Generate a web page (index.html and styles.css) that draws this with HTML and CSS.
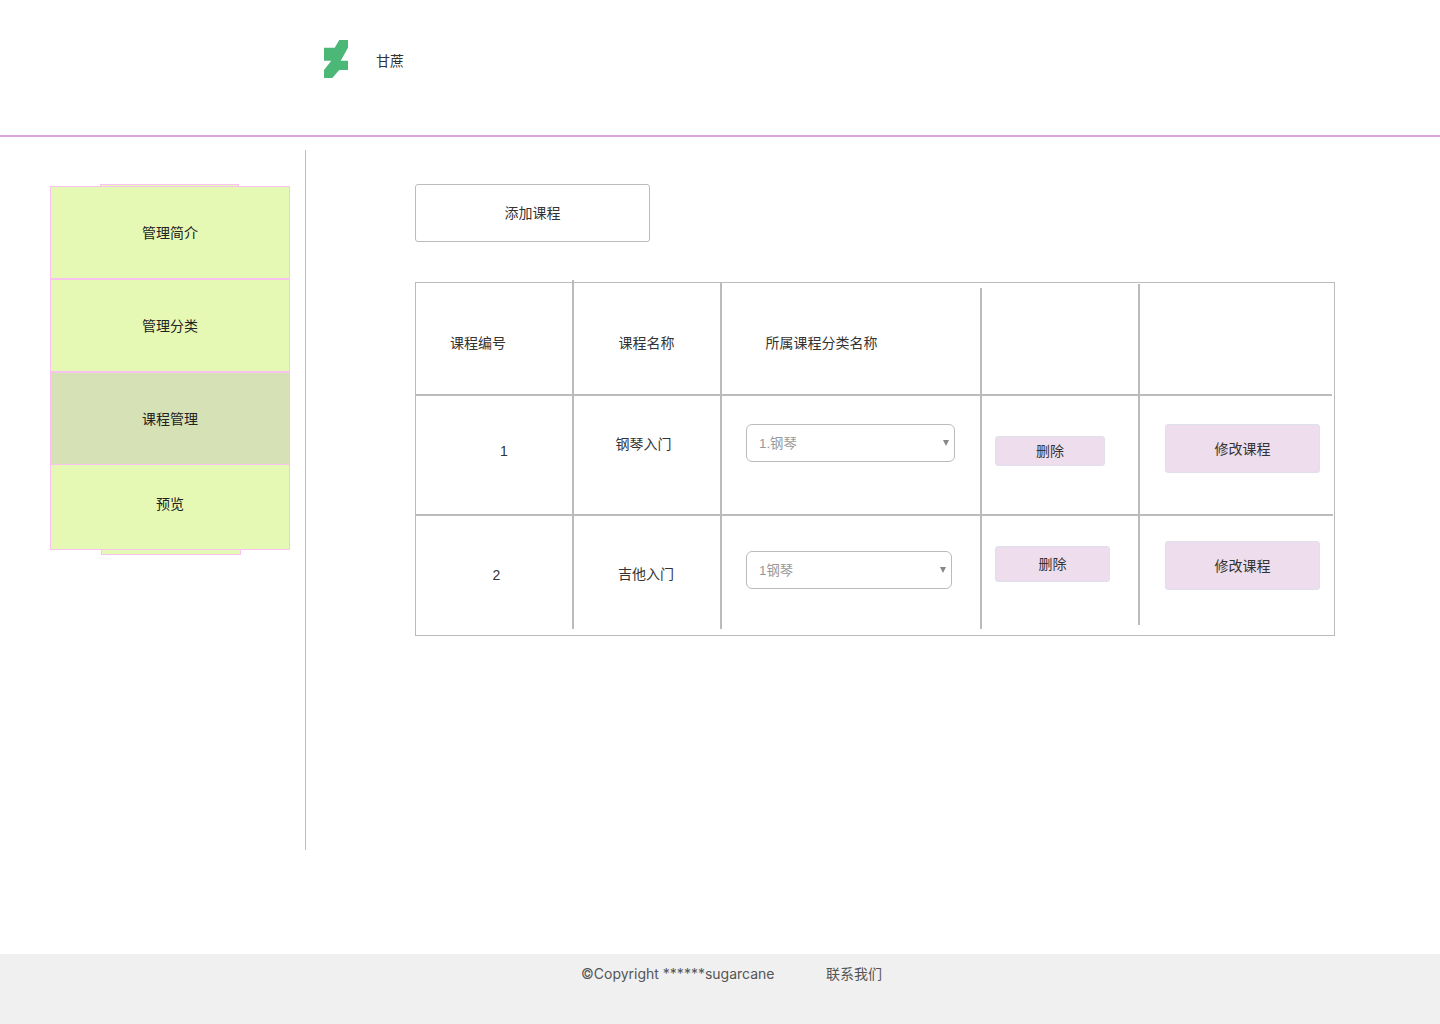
FILE: index.html
```html
<!DOCTYPE html>
<html lang="zh-CN">
<head>
  <meta charset="UTF-8" />
  <meta name="viewport" content="width=device-width, initial-scale=1.0" />
  <title>课程管理</title>
  <link rel="stylesheet" href="styles.css">
</head>
<body>
  <header class="topBar">
    <svg class="logo" viewBox="0 0 24 38" width="24" height="38" aria-hidden="true">
      <polygon points="15.3,0 24,0 24,7.7 16.7,20.7 24,20.7 24,30 15.3,30 8.3,38 0,38 0,30 7.3,20.7 0,20.7 0,7.7 10.7,7.7" />
    </svg>
    <span class="brand">甘蔗</span>
  </header>

  <div class="content">
    <aside class="side">
      <div class="strip stripTop"></div>
      <nav class="menu">
        <a class="menuItem" href="#">管理简介</a>
        <a class="menuItem" href="#">管理分类</a>
        <a class="menuItem active" href="#">课程管理</a>
        <a class="menuItem last" href="#">预览</a>
      </nav>
      <div class="strip stripBottom"></div>
    </aside>

    <main class="main">
      <button class="addBtn" type="button">添加课程</button>

      <div class="courseTable">
        <div class="cell headNum">课程编号</div>
        <div class="cell headName">课程名称</div>
        <div class="cell headType">所属课程分类名称</div>
        <div class="cell"></div>
        <div class="cell"></div>

        <div class="cell numOne">1</div>
        <div class="cell nameOne">钢琴入门</div>
        <div class="cell selectOne">
          <div class="selectWrap wide">
            <select><option>1.钢琴</option></select>
          </div>
        </div>
        <div class="cell delOne"><button class="pinkBtn smallBtn" type="button">删除</button></div>
        <div class="cell editOne"><button class="pinkBtn editBtn" type="button">修改课程</button></div>

        <div class="cell numTwo">2</div>
        <div class="cell nameTwo">吉他入门</div>
        <div class="cell selectTwo">
          <div class="selectWrap">
            <select><option>1钢琴</option></select>
          </div>
        </div>
        <div class="cell delTwo"><button class="pinkBtn bigDel" type="button">删除</button></div>
        <div class="cell editTwo"><button class="pinkBtn editBtn" type="button">修改课程</button></div>

        <!-- hand drawn divider lines, they don't line up exactly -->
        <span class="vLine v1"></span>
        <span class="vLine v2"></span>
        <span class="vLine v3"></span>
        <span class="vLine v4"></span>
        <span class="hLine h1"></span>
        <span class="hLine h2"></span>
      </div>
    </main>
  </div>

  <footer class="footer">
    <span class="copy">©Copyright ******sugarcane</span>
    <a class="contact" href="#">联系我们</a>
  </footer>
</body>
</html>
```

FILE: styles.css
```css
* {
  box-sizing: border-box;
}

body {
  margin: 0;
  height: 1024px;
  display: flex;
  flex-direction: column;
  font-family: "Liberation Sans", "Noto Sans CJK SC", sans-serif;
  font-size: 14px;
  color: #333;
  background-color: white;
  overflow: hidden;
}

.topBar {
  height: 137px;
  flex: none;
  display: flex;
  align-items: flex-start;
  padding: 40px 0 0 324px;
  border-bottom: 2px solid #dda5dd;
}

.logo {
  fill: #4cb877;
}

.brand {
  margin: 13px 0 0 28px;
  line-height: 16px;
}

.content {
  flex: 1;
  display: flex;
}

/* sidebar */
.side {
  width: 306px;
  height: 700px;
  flex: none;
  margin-top: 13px;
  padding: 34px 0 0 50px;
  border-right: 1px solid #bbb;
}

.strip {
  width: 139px;
  margin-left: 50px;
  background-color: #e6f9b4;
  border: 1px solid #f8c3ee;
}

.stripTop {
  height: 2px;
  margin-top: 0;
  border-bottom: none;
}

.stripBottom {
  height: 5px;
  width: 140px;
  margin-left: 51px;
  border-top: none;
}

.menu {
  width: 240px;
  display: flex;
  flex-direction: column;
  border: 1px solid #f8c3ee;
}

.menuItem {
  height: 93px;
  display: flex;
  align-items: center;
  justify-content: center;
  padding-bottom: 1px;
  color: #222;
  text-decoration: none;
  background-color: #e6f9b4;
  border-bottom: 2px solid #f8c3ee;
}

.menuItem.active {
  height: 92px;
  background-color: #d7e1b6;
  border-bottom-width: 1px;
}

.menuItem.last {
  height: 84px;
  padding-bottom: 8px;
  border-bottom: none;
}

/* main area */
.main {
  padding: 47px 0 0 109px;
}

.addBtn {
  display: block;
  width: 235px;
  height: 58px;
  padding-bottom: 3px;
  font: inherit;
  color: #333;
  background-color: white;
  border: 1px solid #bbb;
  border-radius: 3px;
}

.courseTable {
  position: relative;
  width: 920px;
  height: 354px;
  margin-top: 40px;
  display: grid;
  grid-template-columns: 157px 148px 260px 158px 195px;
  grid-template-rows: 112px 120px 120px;
  border: 1px solid #bbb;
  line-height: 16px;
}

.vLine {
  position: absolute;
  width: 2px;
  background-color: #bbb;
}

.v1 { left: 156px; top: -3px; height: 349px; }
.v2 { left: 304px; top: 0; height: 346px; }
.v3 { left: 564px; top: 5px; height: 341px; }
.v4 { left: 722px; top: 1px; height: 341px; }

.hLine {
  position: absolute;
  left: 0;
  height: 2px;
  background-color: #bbb;
}

.h1 { top: 111px; width: 916px; }
.h2 { top: 231px; width: 917px; }

.headNum { padding: 52px 0 0 34px; }
.headName { padding: 52px 0 0 45.5px; }
.headType { padding: 52px 0 0 44.5px; }

.numOne { padding: 48px 0 0 84px; }
.nameOne { padding: 41px 0 0 42.5px; }
.numTwo { padding: 52px 0 0 76.5px; }
.nameTwo { padding: 51px 0 0 45px; }

.selectOne { padding: 29px 0 0 25px; }
.selectTwo { padding: 36px 0 0 25px; }
.delOne { padding: 41px 0 0 14px; }
.delTwo { padding: 31px 0 0 14px; }
.editOne { padding: 29px 0 0 26px; }
.editTwo { padding: 26px 0 0 26px; }

.selectWrap {
  position: relative;
  width: 206px;
}

.selectWrap.wide {
  width: 209px;
}

.selectWrap::after {
  content: "";
  position: absolute;
  right: 6px;
  top: 16px;
  border-left: 3px solid transparent;
  border-right: 3px solid transparent;
  border-top: 6px solid #888;
}

select {
  display: block;
  width: 100%;
  height: 38px;
  padding: 0 0 0 12px;
  font: 13.33px "Liberation Sans", "Noto Sans CJK SC", sans-serif;
  color: #999;
  background-color: white;
  border: 1px solid #bbb;
  border-radius: 6px;
  appearance: none;
}

.pinkBtn {
  display: block;
  font: inherit;
  color: #333;
  background-color: #eddded;
  border: 1px solid #dfe0ee;
  border-radius: 3px;
}

.smallBtn {
  width: 110px;
  height: 30px;
}

.bigDel {
  width: 115px;
  height: 36px;
}

.editBtn {
  width: 155px;
  height: 49px;
}

/* footer */
.footer {
  height: 70px;
  flex: none;
  padding: 12px 0 0 581px;
  display: flex;
  align-items: flex-start;
  gap: 52px;
  line-height: 16px;
  color: #555;
  background-color: #f0f0f0;
}

.copy {
  width: 193px;
  flex: none;
  white-space: nowrap;
  font-family: "Inter", "Noto Sans CJK SC", sans-serif;
}

.contact {
  color: #555;
  text-decoration: none;
}
```
